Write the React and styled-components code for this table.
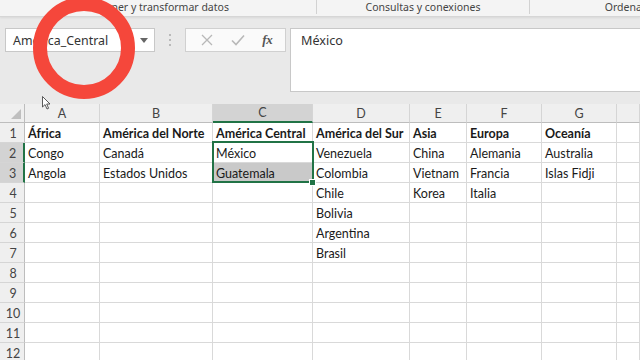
import React from "react";
import styled, { createGlobalStyle } from "styled-components";

const GlobalStyle = createGlobalStyle`
  html, body { margin: 0; padding: 0; background: #e9e9e9; overflow: hidden; }
  * { box-sizing: border-box; }
`;

const UI = `"Noto Sans", "Open Sans", sans-serif`;
const CELL = `Lato, "Liberation Sans", sans-serif`;

const Screen = styled.div`
  position: relative;
  width: 640px;
  height: 360px;
  overflow: hidden;
  background: #e9e9e9;
  font-family: ${UI};
`;

const RibbonStrip = styled.div`
  display: flex;
  height: 17px;
  background: #f4f4f4;
  border-bottom: 1px solid #d6d6d6;
  box-shadow: 0 1px 2px rgba(0,0,0,0.08);
  overflow: hidden;
`;

const RibbonGroup = styled.div`
  flex: 0 0 ${p => p.$w}px;
  display: flex;
  align-items: center;
  justify-content: center;
  height: 14px;
  font-size: 10.5px;
  color: #444;
  white-space: nowrap;
  border-right: 1px solid #d2d2d2;
  line-height: 1;
`;

const FormulaArea = styled.div`
  display: flex;
  align-items: flex-start;
  height: 87px;
  padding: 11px 0 0 5px;
`;

const NameBox = styled.div`
  display: flex;
  align-items: center;
  justify-content: space-between;
  width: 150px;
  height: 24px;
  background: #fff;
  border: 1px solid #c8c8c8;
  padding: 0 6px 0 7px;
  font-size: 12.4px;
  color: #333;
`;

const Grip = styled.div`
  width: 30px;
  height: 24px;
  display: flex;
  flex-direction: column;
  align-items: center;
  justify-content: center;
  gap: 3px;
  span {
    width: 2px;
    height: 2px;
    background: #a9a9a9;
    border-radius: 1px;
  }
`;

const FxBox = styled.div`
  display: flex;
  align-items: center;
  justify-content: space-around;
  width: 101px;
  height: 24px;
  background: #fafafa;
  border: 1px solid #d0d0d0;
  padding: 0 4px 0 6px;
`;

const FxLabel = styled.span`
  font-family: "Liberation Serif", "DejaVu Serif", serif;
  font-style: italic;
  font-size: 13px;
  font-weight: bold;
  color: #555;
  letter-spacing: -0.5px;
`;

const FormulaInput = styled.div`
  flex: 1;
  height: 64px;
  margin-left: 4px;
  margin-right: -2px;
  background: #fff;
  border: 1px solid #c8c8c8;
  padding: 3px 10px;
  font-size: 12.6px;
  color: #333;
`;

const SheetWrap = styled.div`
  position: relative;
`;

const Sheet = styled.div`
  display: grid;
  grid-template-columns: 25px 75px 113px 100px 97px 57px 75px 75px 1fr;
  grid-template-rows: 19px repeat(12, 20px);
  background: #fff;
`;

const HeaderCell = styled.div`
  display: flex;
  align-items: center;
  justify-content: center;
  background: ${p => (p.$active ? "#d3d3d3" : "#efefef")};
  border-right: 1px solid #d5d5d5;
  border-bottom: ${p => (p.$active ? "2px solid #217346" : "1px solid #bdbdbd")};
  font-family: ${CELL};
  font-size: 12.5px;
  color: #444;
`;

const Corner = styled.div`
  position: relative;
  background: #efefef;
  border-right: 1px solid #bdbdbd;
  border-bottom: 1px solid #bdbdbd;
  &::after {
    content: "";
    position: absolute;
    right: 3px;
    bottom: 3px;
    border-style: solid;
    border-width: 0 0 10px 10px;
    border-color: transparent transparent #bfbfbf transparent;
  }
`;

const RowHeader = styled.div`
  display: flex;
  align-items: center;
  justify-content: center;
  padding: 1px 0 0 2px;
  background: ${p => (p.$active ? "#d3d3d3" : "#efefef")};
  border-right: ${p => (p.$active ? "2px solid #217346" : "1px solid #bdbdbd")};
  border-bottom: 1px solid #d5d5d5;
  font-family: ${CELL};
  font-size: 12.5px;
  color: #444;
`;

const Cell = styled.div`
  display: flex;
  align-items: center;
  padding: 1px 2px 0 3px;
  background: ${p => (p.$shade ? "#c9c9c9" : "#fff")};
  border-right: 1px solid #d9d9d9;
  border-bottom: 1px solid #d9d9d9;
  font-family: ${CELL};
  font-size: 12.5px;
  font-weight: ${p => (p.$bold ? 700 : 400)};
  color: #1a1a1a;
  white-space: nowrap;
  overflow: visible;
`;

const Selection = styled.div`
  position: absolute;
  left: 212px;
  top: 37px;
  width: 102px;
  height: 42px;
  border: 2px solid #217346;
  pointer-events: none;
`;

const FillHandle = styled.div`
  position: absolute;
  left: 309px;
  top: 75px;
  width: 7px;
  height: 7px;
  background: #217346;
  border: 1px solid #fff;
`;

const Ring = styled.svg`
  position: absolute;
  left: 28px;
  top: -8px;
  pointer-events: none;
`;

const Pointer = styled.svg`
  position: absolute;
  left: 42px;
  top: 96px;
  pointer-events: none;
`;

const cols = ["A", "B", "C", "D", "E", "F", "G", ""];

const data = [
  ["África", "América del Norte", "América Central", "América del Sur", "Asia", "Europa", "Oceanía", ""],
  ["Congo", "Canadá", "México", "Venezuela", "China", "Alemania", "Australia", ""],
  ["Angola", "Estados Unidos", "Guatemala", "Colombia", "Vietnam", "Francia", "Islas Fidji", ""],
  ["", "", "", "Chile", "Korea", "Italia", "", ""],
  ["", "", "", "Bolivia", "", "", "", ""],
  ["", "", "", "Argentina", "", "", "", ""],
  ["", "", "", "Brasil", "", "", "", ""],
  ["", "", "", "", "", "", "", ""],
  ["", "", "", "", "", "", "", ""],
  ["", "", "", "", "", "", "", ""],
  ["", "", "", "", "", "", "", ""],
  ["", "", "", "", "", "", "", ""],
];

export default function App() {
  return (
    <Screen>
      <GlobalStyle />
      <RibbonStrip>
        <RibbonGroup $w={317}>Obtener y transformar datos</RibbonGroup>
        <RibbonGroup $w={213}>Consultas y conexiones</RibbonGroup>
        <RibbonGroup $w={230}>Ordenar y filtrar</RibbonGroup>
      </RibbonStrip>
      <FormulaArea>
        <NameBox>
          <span>América_Central</span>
          <svg width="8" height="5" viewBox="0 0 8 5">
            <path d="M0 0 L8 0 L4 5 Z" fill="#666" />
          </svg>
        </NameBox>
        <Grip>
          <span />
          <span />
          <span />
        </Grip>
        <FxBox>
          <svg width="12" height="12" viewBox="0 0 12 12">
            <path d="M1 1 L11 11 M11 1 L1 11" stroke="#b8b8b8" strokeWidth="1.3" />
          </svg>
          <svg width="14" height="12" viewBox="0 0 14 12">
            <path d="M1 6.5 L5 10.5 L13 1.5" stroke="#b8b8b8" strokeWidth="1.6" fill="none" />
          </svg>
          <FxLabel>fx</FxLabel>
        </FxBox>
        <FormulaInput>México</FormulaInput>
      </FormulaArea>
      <SheetWrap>
        <Sheet>
          <Corner />
          {cols.map((c, i) => (
            <HeaderCell key={i} $active={c === "C"}>
              {c}
            </HeaderCell>
          ))}
          {data.map((row, r) => (
            <React.Fragment key={r}>
              <RowHeader $active={r === 1 || r === 2}>{r + 1}</RowHeader>
              {row.map((v, c) => (
                <Cell key={c} $bold={r === 0} $shade={r === 2 && c === 2}>
                  {v}
                </Cell>
              ))}
            </React.Fragment>
          ))}
        </Sheet>
        <Selection />
        <FillHandle />
      </SheetWrap>
      <Ring width="112" height="112" viewBox="0 0 112 112">
        <circle cx="56" cy="56" r="44" fill="none" stroke="#f5473b" strokeWidth="14" />
      </Ring>
      <Pointer width="9" height="14" viewBox="0 0 9 14">
        <path d="M0.5 0.5 L0.5 11 L3 8.6 L5 13 L6.6 12.3 L4.7 8 L8 8 Z" fill="#fff" stroke="#333" strokeWidth="0.8" />
      </Pointer>
    </Screen>
  );
}
